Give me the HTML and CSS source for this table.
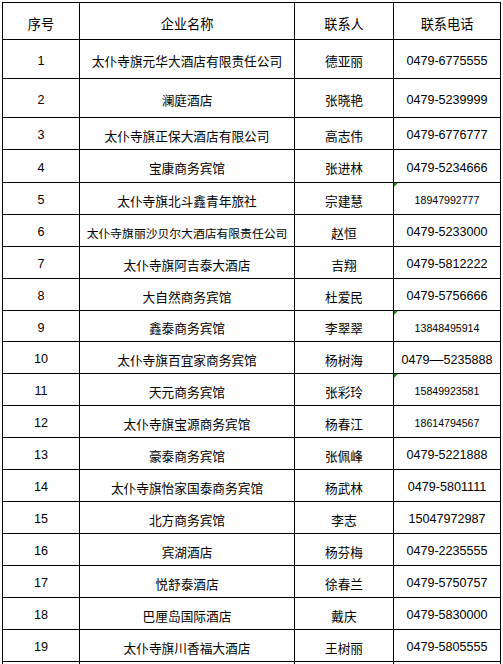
FILE: index.html
```html
<!DOCTYPE html>
<html lang="zh-CN">
<head>
<meta charset="utf-8">
<title>企业联系表</title>
<link rel="stylesheet" href="styles.css">
</head>
<body>
<div class="sheet">
  <div class="row head"><div class="c">序号</div><div class="c">企业名称</div><div class="c">联系人</div><div class="c">联系电话</div></div>
  <div class="row"><div class="c n">1</div><div class="c">太仆寺旗元华大酒店有限责任公司</div><div class="c">德亚丽</div><div class="c n">0479-6775555</div></div>
  <div class="row"><div class="c n">2</div><div class="c">澜庭酒店</div><div class="c">张晓艳</div><div class="c n">0479-5239999</div></div>
  <div class="row"><div class="c n">3</div><div class="c">太仆寺旗正保大酒店有限公司</div><div class="c">高志伟</div><div class="c n">0479-6776777</div></div>
  <div class="row"><div class="c n">4</div><div class="c">宝康商务宾馆</div><div class="c">张进林</div><div class="c n">0479-5234666</div></div>
  <div class="row"><div class="c n">5</div><div class="c">太仆寺旗北斗鑫青年旅社</div><div class="c">宗建慧</div><div class="c n sm flag">18947992777</div></div>
  <div class="row"><div class="c n">6</div><div class="c tight">太仆寺旗丽沙贝尔大酒店有限责任公司</div><div class="c">赵恒</div><div class="c n">0479-5233000</div></div>
  <div class="row"><div class="c n">7</div><div class="c">太仆寺旗阿吉泰大酒店</div><div class="c">吉翔</div><div class="c n">0479-5812222</div></div>
  <div class="row"><div class="c n">8</div><div class="c">大自然商务宾馆</div><div class="c">杜爱民</div><div class="c n">0479-5756666</div></div>
  <div class="row"><div class="c n">9</div><div class="c">鑫泰商务宾馆</div><div class="c">李翠翠</div><div class="c n sm flag">13848495914</div></div>
  <div class="row"><div class="c n">10</div><div class="c">太仆寺旗百宜家商务宾馆</div><div class="c">杨树海</div><div class="c n"><span>0479<span class="dash">—</span>5235888</span></div></div>
  <div class="row"><div class="c n">11</div><div class="c">天元商务宾馆</div><div class="c">张彩玲</div><div class="c n sm flag">15849923581</div></div>
  <div class="row"><div class="c n">12</div><div class="c">太仆寺旗宝源商务宾馆</div><div class="c">杨春江</div><div class="c n sm">18614794567</div></div>
  <div class="row"><div class="c n">13</div><div class="c">豪泰商务宾馆</div><div class="c">张佩峰</div><div class="c n">0479-5221888</div></div>
  <div class="row"><div class="c n">14</div><div class="c">太仆寺旗怡家国泰商务宾馆</div><div class="c">杨武林</div><div class="c n">0479-5801111</div></div>
  <div class="row"><div class="c n">15</div><div class="c">北方商务宾馆</div><div class="c">李志</div><div class="c n">15047972987</div></div>
  <div class="row"><div class="c n">16</div><div class="c">宾湖酒店</div><div class="c">杨芬梅</div><div class="c n">0479-2235555</div></div>
  <div class="row"><div class="c n">17</div><div class="c">悦舒泰酒店</div><div class="c">徐春兰</div><div class="c n">0479-5750757</div></div>
  <div class="row"><div class="c n">18</div><div class="c">巴厘岛国际酒店</div><div class="c">戴庆</div><div class="c n">0479-5830000</div></div>
  <div class="row"><div class="c n">19</div><div class="c">太仆寺旗川香福大酒店</div><div class="c">王树丽</div><div class="c n">0479-5805555</div></div>
  <div class="row"><div class="c"></div><div class="c"></div><div class="c"></div><div class="c"></div></div>
</div>
</body>
</html>
```

FILE: styles.css
```css
html, body {
  margin: 0;
  padding: 0;
  background: #fff;
  overflow: hidden;
}

body {
  font-family: "Noto Sans CJK SC", "Liberation Sans", sans-serif;
  font-size: 12.7px;
  color: #000;
}

.sheet {
  display: grid;
  grid-template-columns: 76px 214px 98px 106px;
  grid-template-rows: 36px 38px 38px 31px 32px 31px 31px 31px 31px 30px 31px 31px 31px 31px 31px 31px 31px 31px 31px 31px 30px;
  gap: 1px;
  padding: 1px;
  background: #000;
  width: max-content;
  margin: 2px 0 0 2px;
}

.row {
  display: contents;
}

.c {
  position: relative;
  background: #fff;
  display: flex;
  align-items: center;
  justify-content: center;
  padding-top: 5px;
  box-sizing: border-box;
  white-space: nowrap;
  line-height: 1;
}

.head .c {
  font-size: 13.2px;
}

.n {
  font-family: "Liberation Sans", "Noto Sans CJK SC", sans-serif;
  font-size: 12.6px;
  padding-top: 4px;
}

.n.sm {
  font-size: 10.6px;
}

.tight {
  font-size: 11.8px;
}

.dash {
  font-family: "Liberation Sans", sans-serif;
  font-size: 14px;
}

.flag::before {
  content: "";
  position: absolute;
  left: 0;
  top: 0;
  width: 0;
  height: 0;
  border-top: 4px solid #169416;
  border-right: 4px solid transparent;
}
```
